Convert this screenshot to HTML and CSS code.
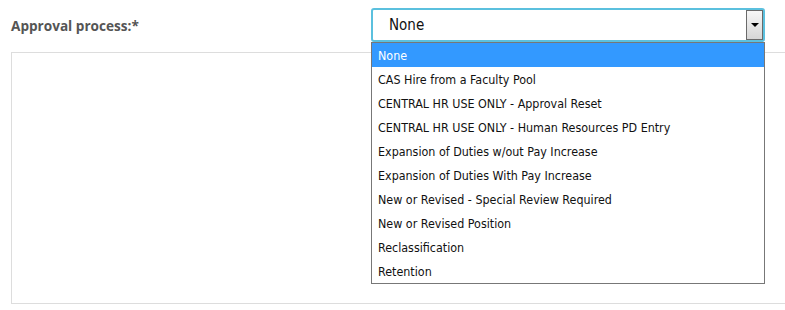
FILE: index.html
```html
<!DOCTYPE html>
<html lang="en">
<head>
  <meta charset="UTF-8" />
  <title>Approval process</title>
  <link rel="stylesheet" href="styles.css">
</head>
<body>
  <div class="field">
    <label class="field-label">Approval process:*</label>
    <div class="select-wrap">
      <div class="select">
        <span class="select-value">None</span>
        <span class="select-arrow"></span>
      </div>
      <ul class="dropdown">
        <li class="selected">None</li>
        <li>CAS Hire from a Faculty Pool</li>
        <li>CENTRAL HR USE ONLY - Approval Reset</li>
        <li>CENTRAL HR USE ONLY - Human Resources PD Entry</li>
        <li>Expansion of Duties w/out Pay Increase</li>
        <li>Expansion of Duties With Pay Increase</li>
        <li>New or Revised - Special Review Required</li>
        <li>New or Revised Position</li>
        <li>Reclassification</li>
        <li>Retention</li>
      </ul>
    </div>
  </div>
  <div class="panel"></div>
</body>
</html>
```

FILE: styles.css
```css
body {
  margin: 0;
  background: #fff;
  overflow: hidden;
  font-family: "Open Sans", Arial, sans-serif;
}
.field {
  display: flex;
  align-items: center;
  padding: 8px 0 0 11px;
}
.field-label {
  width: 360px;
  font-size: 13.6px;
  font-weight: 700;
  color: #555;
  margin-top: 1px;
}
.select-wrap {
  position: relative;
  width: 394px;
}
.select {
  height: 30px;
  border: 2px solid #5bc0de;
  border-radius: 3px;
  display: flex;
  align-items: center;
  padding-left: 16px;
  font-family: "DejaVu Sans Condensed", "DejaVu Sans", sans-serif;
  font-size: 15px;
  color: #111;
}
.select-arrow {
  position: absolute;
  top: 2px;
  right: 2px;
  width: 15px;
  height: 28px;
  border: 1px solid #6a6a6a;
  background: linear-gradient(to bottom, #f7f7f7, #d6d6d6);
}
.select-arrow::after {
  content: "";
  position: absolute;
  left: 4px;
  top: 12px;
  border-left: 4px solid transparent;
  border-right: 4px solid transparent;
  border-top: 4px solid #000;
}
.dropdown {
  position: absolute;
  top: 34px;
  left: 0;
  width: 392px;
  margin: 0;
  padding: 0;
  list-style: none;
  background: #fff;
  border: 1px solid #777;
  font-family: "DejaVu Sans Condensed", "DejaVu Sans", sans-serif;
  font-size: 12.4px;
  color: #111;
}
.dropdown li {
  height: 24px;
  line-height: 25px;
  padding-left: 6px;
}
.dropdown li.selected {
  background: #3399ff;
  color: #fff;
}
.panel {
  margin: 10px 0 0 11px;
  width: 800px;
  height: 250px;
  border: 1px solid #ddd;
}
```
